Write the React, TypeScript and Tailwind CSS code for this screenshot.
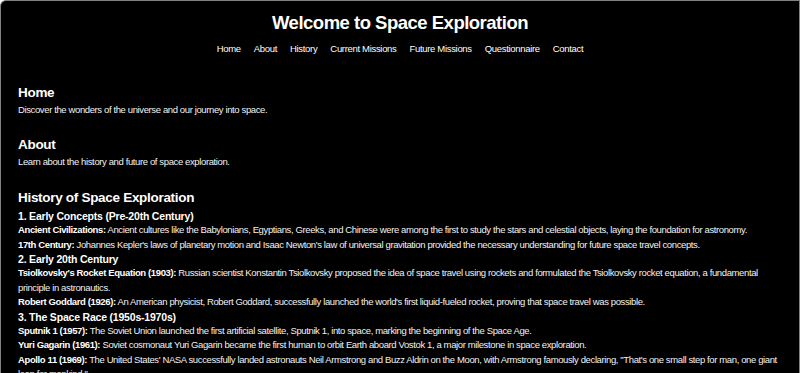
import React from "react";

const navLinks = ["Home", "About", "History", "Current Missions", "Future Missions", "Questionnaire", "Contact"];

type Entry = { label: string; text: string };

const history: { title: string; entries: Entry[] }[] = [
  {
    title: "1. Early Concepts (Pre-20th Century)",
    entries: [
      {
        label: "Ancient Civilizations:",
        text: "Ancient cultures like the Babylonians, Egyptians, Greeks, and Chinese were among the first to study the stars and celestial objects, laying the foundation for astronomy.",
      },
      {
        label: "17th Century:",
        text: "Johannes Kepler's laws of planetary motion and Isaac Newton's law of universal gravitation provided the necessary understanding for future space travel concepts.",
      },
    ],
  },
  {
    title: "2. Early 20th Century",
    entries: [
      {
        label: "Tsiolkovsky's Rocket Equation (1903):",
        text: "Russian scientist Konstantin Tsiolkovsky proposed the idea of space travel using rockets and formulated the Tsiolkovsky rocket equation, a fundamental principle in astronautics.",
      },
      {
        label: "Robert Goddard (1926):",
        text: "An American physicist, Robert Goddard, successfully launched the world's first liquid-fueled rocket, proving that space travel was possible.",
      },
    ],
  },
  {
    title: "3. The Space Race (1950s-1970s)",
    entries: [
      {
        label: "Sputnik 1 (1957):",
        text: "The Soviet Union launched the first artificial satellite, Sputnik 1, into space, marking the beginning of the Space Age.",
      },
      {
        label: "Yuri Gagarin (1961):",
        text: "Soviet cosmonaut Yuri Gagarin became the first human to orbit Earth aboard Vostok 1, a major milestone in space exploration.",
      },
      {
        label: "Apollo 11 (1969):",
        text: "The United States' NASA successfully landed astronauts Neil Armstrong and Buzz Aldrin on the Moon, with Armstrong famously declaring, \"That's one small step for man, one giant leap for mankind.\"",
      },
    ],
  },
];

const Heading = ({ children }: { children: React.ReactNode }) => (
  <h2 className="text-[13.5px] leading-[18px] font-bold tracking-[-0.3px] text-white">{children}</h2>
);

const Para = ({ children }: { children: React.ReactNode }) => (
  <p className="mt-px text-[9.5px] leading-[14.4px] tracking-[-0.38px] text-[#f2f2f2]">{children}</p>
);

const App = () => {
  return (
    <div
      className="min-h-screen bg-black border-l border-t border-r border-[#808080] rounded-tl-[6px] overflow-hidden"
      style={{ fontFamily: '"Liberation Sans", Arial, sans-serif' }}
    >
      <header className="pt-[9px] text-center">
        <h1 className="text-[18.5px] leading-[26px] font-bold tracking-[-0.5px] text-white">
          Welcome to Space Exploration
        </h1>
        <nav className="mt-[6px] flex justify-center gap-[13px]">
          {navLinks.map((link) => (
            <a key={link} href="#" className="text-[9.5px] leading-[14px] tracking-[-0.32px] text-white">
              {link}
            </a>
          ))}
        </nav>
      </header>

      <main className="px-[17px] pt-[28px]">
        <section>
          <Heading>Home</Heading>
          <Para>Discover the wonders of the universe and our journey into space.</Para>
        </section>

        <section className="mt-[19px]">
          <Heading>About</Heading>
          <Para>Learn about the history and future of space exploration.</Para>
        </section>

        <section className="mt-[19px]">
          <Heading>History of Space Exploration</Heading>
          <div className="mt-[2px]">
            {history.map((block) => (
              <div key={block.title}>
                <h3 className="text-[10.5px] leading-[14.4px] font-bold tracking-[-0.2px] text-white">
                  {block.title}
                </h3>
                {block.entries.map((entry) => (
                  <p key={entry.label} className="text-[9.5px] leading-[14.4px] tracking-[-0.38px] text-[#f2f2f2]">
                    <strong className="font-bold text-white">{entry.label}</strong> {entry.text}
                  </p>
                ))}
              </div>
            ))}
          </div>
        </section>
      </main>
    </div>
  );
};

export default App;
